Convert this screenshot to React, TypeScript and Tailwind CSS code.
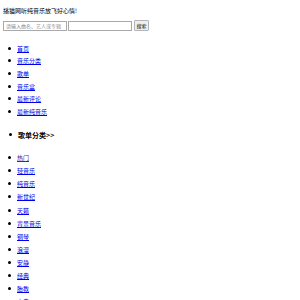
const NAV = ['首页', '音乐分类', '歌单', '音乐盒', '最新评论', '最新纯音乐'];

const CATS = ['热门', '轻音乐', '纯音乐', '新世纪', '天籁', '背景音乐', '钢琴', '浪漫', '安静', '经典', '胎教', '古典'];

const font = { fontFamily: '"Noto Sans CJK SC", "Liberation Sans", sans-serif' };

function Dot() {
  return <span className="w-[3px] h-[3px] rounded-full bg-black shrink-0" />;
}

export default function App() {
  return (
    <div className="w-[300px] h-[300px] overflow-hidden bg-white text-black" style={font}>
      <div className="px-[3px] pt-[7px]">
        <div className="text-[6px] leading-[8px] h-[8px]">播猫网听纯音乐放飞好心情!</div>
        <div className="flex items-center gap-[1px] mt-[5px] h-[11px]">
          <input
            placeholder="请输入曲名、艺人或专辑"
            className="w-[64px] h-[10px] border border-[#a9a9a9] px-[2px] text-[5px] leading-[8px] placeholder:text-[#8a8a8a] outline-none"
          />
          <input className="w-[64px] h-[10px] border border-[#a9a9a9] text-[5px] outline-none" />
          <button className="ml-[1px] w-[15px] h-[11px] border border-[#b5b5b5] rounded-[1px] bg-[#efefef] text-[5px] leading-[9px] text-black">
            搜索
          </button>
        </div>
      </div>

      <ul className="mt-[11px]">
        {NAV.map((n) => (
          <li key={n} className="flex items-center h-[12.67px] pl-[8px] gap-[6px]">
            <Dot />
            <a href="#" className="text-[6px] text-[#0000ee] underline">{n}</a>
          </li>
        ))}
      </ul>

      <ul className="mt-[11px]">
        <li className="flex items-center h-[12px] pl-[9px] gap-[6px]">
          <Dot />
          <span className="text-[7px] font-bold">歌单分类&gt;&gt;</span>
        </li>
      </ul>

      <ul className="mt-[10px]">
        {CATS.map((c, i) => (
          <li key={c} className="flex items-center h-[13.13px] pl-[8px] gap-[6px]">
            <Dot />
            <a href="#" className={`text-[6px] underline ${i === 0 ? 'text-[#551a8b]' : 'text-[#0000ee]'}`}>{c}</a>
          </li>
        ))}
      </ul>
    </div>
  );
}
